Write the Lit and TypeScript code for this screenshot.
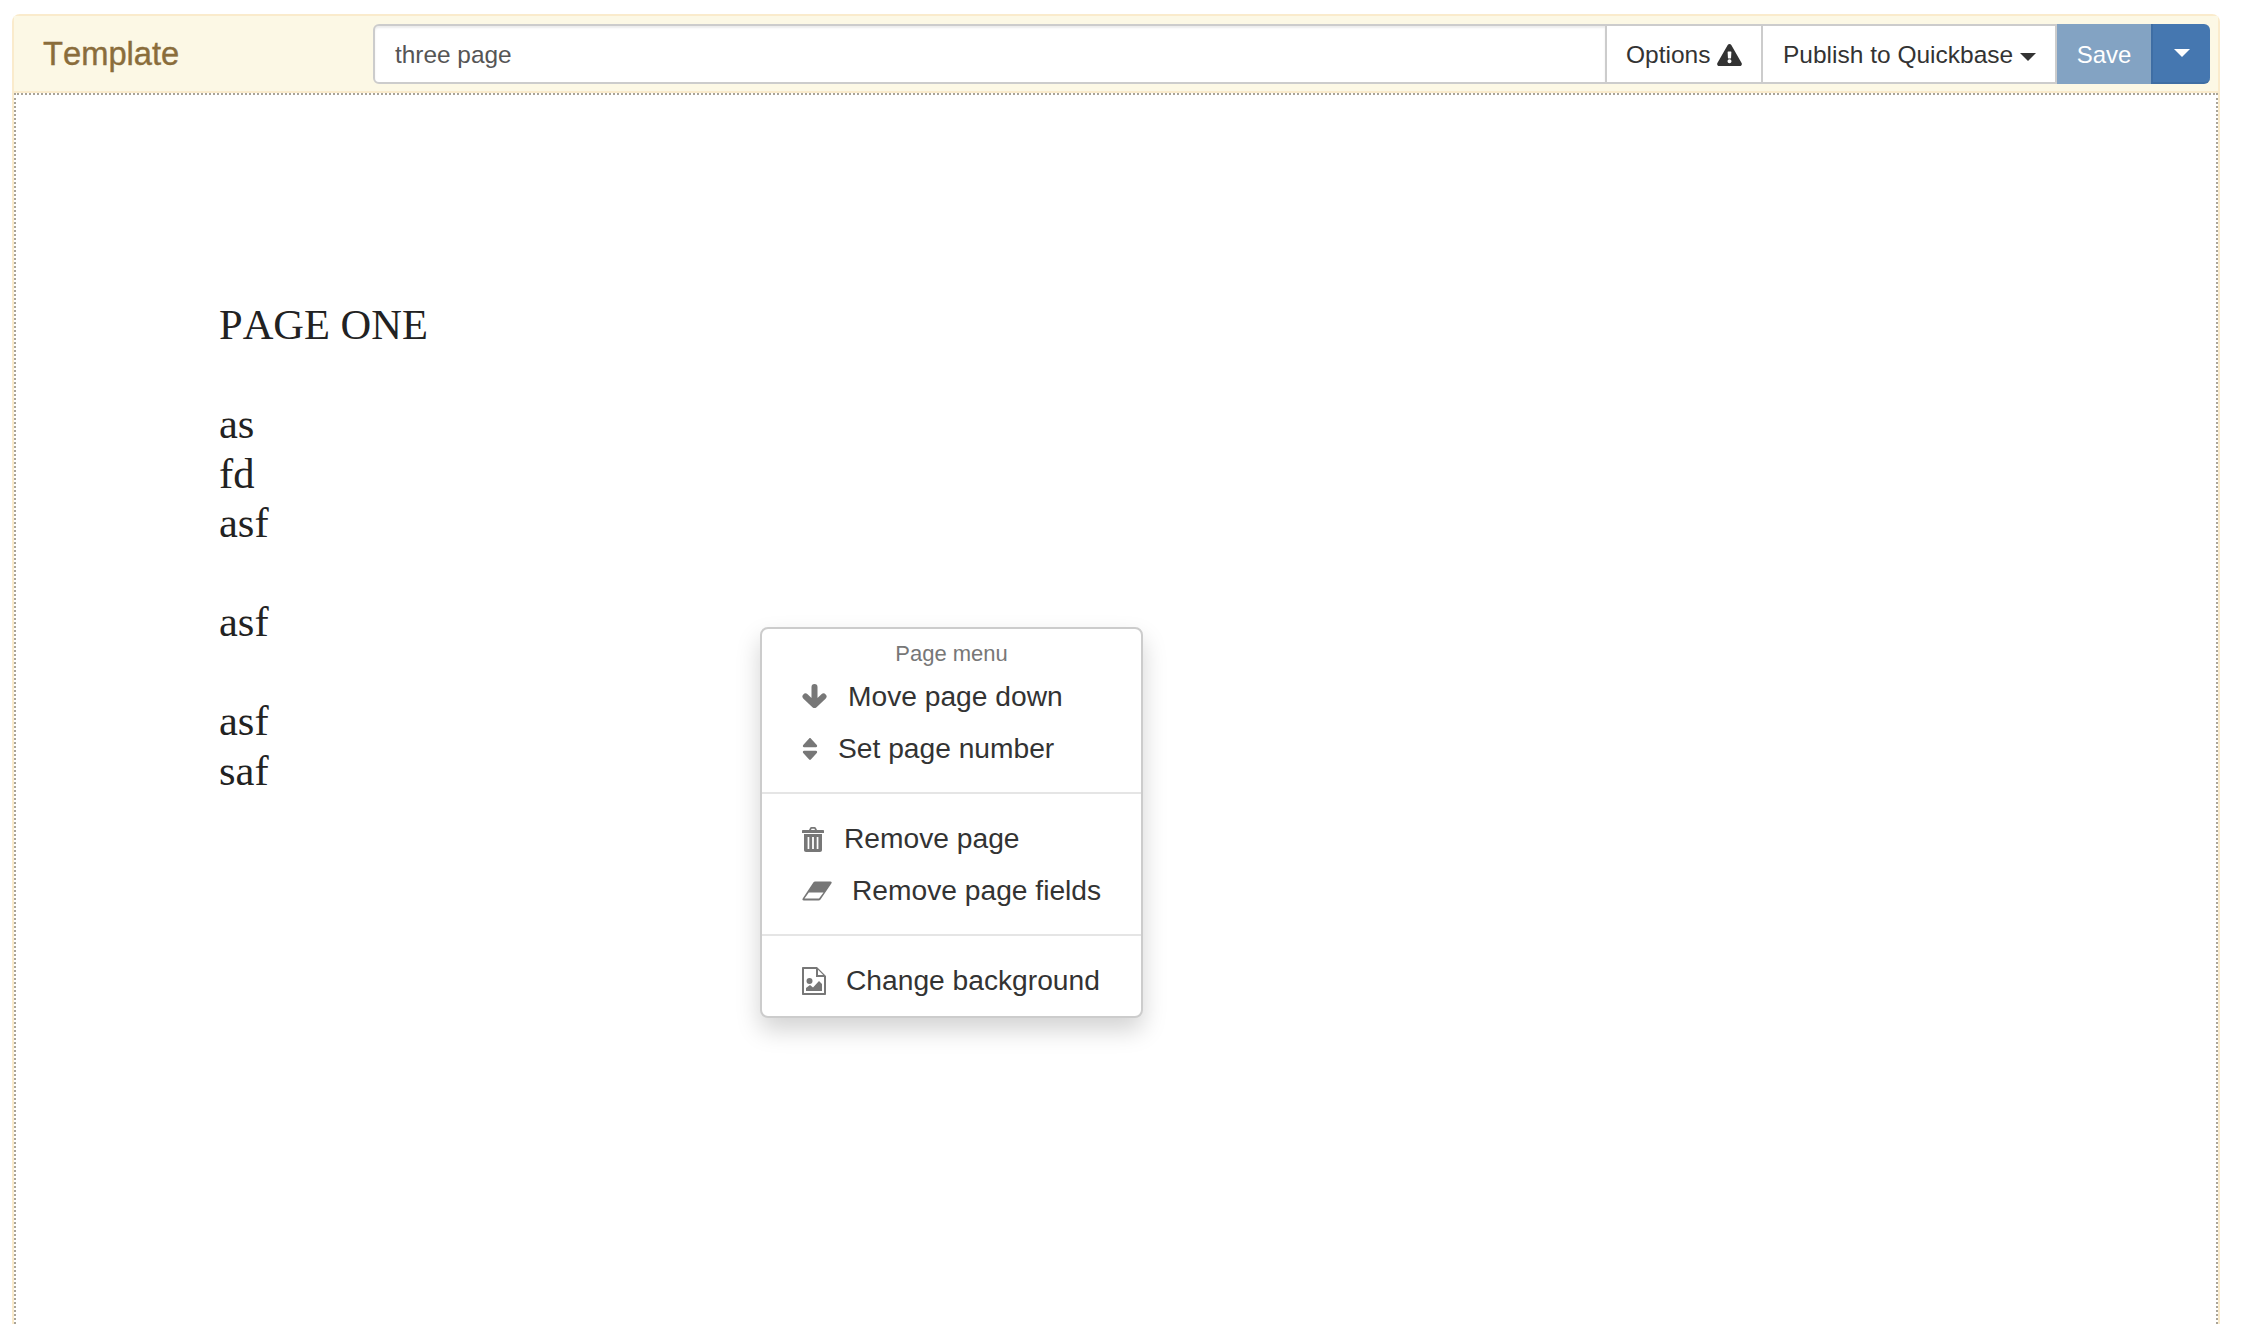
import { LitElement, html, css } from "lit";
import { customElement } from "lit/decorators.js";

@customElement("app-root")
export class AppRoot extends LitElement {
  static styles = css`
    :host {
      display: block;
      height: 1324px;
      box-sizing: border-box;
      padding: 14px 22px 0 12px;
      overflow: hidden;
      background: #fff;
      font-family: "Liberation Sans", Arial, sans-serif;
      font-kerning: none;
      color: #333;
    }
    .panel {
      position: relative;
      height: 100%;
      display: flex;
      flex-direction: column;
      box-sizing: border-box;
      border: 2px solid #faebcc;
      border-bottom: 0;
      border-radius: 8px 8px 0 0;
    }
    .head {
      height: 77px;
      flex: none;
      box-sizing: border-box;
      padding: 8px 8px 7px 29px;
      display: flex;
      align-items: stretch;
      background: #fcf8e5;
      border-bottom: 2px solid #faebcc;
    }
    .title {
      width: 330px;
      flex: none;
      align-self: center;
      font-size: 32.7px;
      color: #8a6d3b;
      -webkit-text-stroke: 0.4px #8a6d3b;
    }
    .group {
      flex: 1;
      display: flex;
      min-width: 0;
    }
    .input {
      flex: 1;
      display: flex;
      align-items: center;
      box-sizing: border-box;
      padding: 2px 0 0 20px;
      background: #fff;
      border: 2px solid #ccc;
      border-radius: 6px 0 0 6px;
      font-size: 24.4px;
      color: #555;
      box-shadow: inset 0 2px 2px rgba(0, 0, 0, 0.075);
    }
    .btn {
      display: flex;
      align-items: center;
      flex: none;
      box-sizing: border-box;
      padding-top: 2px;
      background: #fff;
      border: 2px solid #ccc;
      border-left: 0;
      font-size: 24.5px;
      color: #333;
    }
    .options {
      width: 156px;
      padding-left: 19px;
      gap: 7px;
    }
    .publish {
      width: 294px;
      padding-left: 20px;
      gap: 7px;
    }
    .save {
      width: 94px;
      justify-content: center;
      background: #83a3c3;
      border: 0;
      color: #fff;
      font-size: 24px;
    }
    .more {
      width: 59px;
      justify-content: center;
      padding-top: 0;
      background: #4577b0;
      border: 0;
      border-bottom: 2px solid #3f6ea4;
      border-left: 2px solid #3f6ea4;
      border-radius: 0 6px 6px 0;
    }
    .caret {
      width: 0;
      height: 0;
      margin-top: 3px;
      border-left: 8px solid transparent;
      border-right: 8px solid transparent;
      border-top: 8px solid #333;
    }
    .more .caret {
      border-top-color: #fff;
      margin-top: 0;
      margin-bottom: 0;
    }
    .warn {
      width: 25px;
      height: 22px;
      fill: #333;
    }
    .body {
      flex: 1;
      box-sizing: border-box;
      padding: 205px 0 0 203px;
      border-top: 2px dotted #a9a498;
      border-left: 2px dotted #a9a498;
      border-right: 2px dotted #a9a498;
      font-family: "Liberation Serif", "Times New Roman", serif;
      font-size: 42.5px;
      line-height: 49.5px;
      color: #222;
    }
    .body p {
      margin: 0 0 49.5px;
    }
    .menu {
      position: absolute;
      left: 746px;
      top: 611px;
      width: 383px;
      box-sizing: border-box;
      padding: 8px 0 9px;
      background: #fff;
      border: 2px solid #ccc;
      border-radius: 8px;
      box-shadow: 0 12px 24px rgba(0, 0, 0, 0.175);
      font-size: 28.2px;
      color: #333;
    }
    .menu-title {
      height: 34px;
      line-height: 34px;
      text-align: center;
      font-size: 22px;
      color: #777;
    }
    .item {
      height: 52px;
      box-sizing: border-box;
      display: flex;
      align-items: center;
      padding: 0 0 2px 40px;
      white-space: nowrap;
    }
    .item svg {
      flex: none;
      fill: #777;
      margin-top: 2px;
    }
    .item .arrow {
      width: 25px;
      height: 24px;
      margin-right: 21px;
      margin-top: -1px;
      fill: none;
      stroke: #777;
      stroke-width: 6;
      stroke-linecap: round;
      stroke-linejoin: round;
    }
    .sort {
      width: 16px;
      height: 28px;
      margin-right: 20px;
    }
    .trash {
      width: 22px;
      height: 25px;
      margin-right: 20px;
    }
    .eraser {
      width: 30px;
      height: 20px;
      margin-right: 20px;
    }
    .file {
      width: 24px;
      height: 28px;
      margin-right: 20px;
    }
    hr {
      margin: 17px 0 19px;
      border: 0;
      border-top: 2px solid #e5e5e5;
    }
  `;

  render() {
    return html`
      <div class="panel">
        <div class="head">
          <div class="title">Template</div>
          <div class="group">
            <div class="input">three page</div>
            <div class="btn options">
              Options
              <svg class="warn" viewBox="0 0 576 512"><path d="M569.517 440.013C587.975 472.007 564.806 512 527.94 512H48.054c-36.93 0-60.04-40.055-41.577-71.987L246.423 23.985c18.467-32.009 64.72-31.951 83.154 0l239.94 416.028zM288 354c-25.405 0-46 20.595-46 46s20.595 46 46 46 46-20.595 46-46-20.595-46-46-46zm-43.673-165.346l7.418 136c.347 6.364 5.609 11.346 11.982 11.346h48.546c6.373 0 11.635-4.982 11.982-11.346l7.418-136c.375-6.874-5.098-12.654-11.982-12.654h-63.383c-6.884 0-12.356 5.78-11.981 12.654z"/></svg>
            </div>
            <div class="btn publish">Publish to Quickbase <span class="caret"></span></div>
            <div class="btn save">Save</div>
            <div class="btn more"><span class="caret"></span></div>
          </div>
        </div>
        <div class="body">
          <p>PAGE ONE</p>
          <p>as<br />fd<br />asf</p>
          <p>asf</p>
          <p>asf<br />saf</p>
        </div>
        <div class="menu">
          <div class="menu-title">Page menu</div>
          <div class="item">
            <svg class="arrow" viewBox="0 0 25 24"><path d="M12.500 3V20.500M3.500 12.500 12.500 21 21.500 12.500"/></svg>
            Move page down
          </div>
          <div class="item">
            <svg class="sort" viewBox="0 0 320 512" preserveAspectRatio="none"><path d="M41 288h238c21.4 0 32.1 25.900 17 41L177 448c-9.400 9.400-24.600 9.400-33.900 0L24 329c-15.100-15.100-4.400-41 17-41zm255-105L177 64c-9.400-9.400-24.600-9.400-33.900 0L24 183c-15.100 15.100-4.400 41 17 41h238c21.400 0 32.100-25.900 17-41z"/></svg>
            Set page number
          </div>
          <hr />
          <div class="item">
            <svg class="trash" viewBox="0 0 22 25"><path fill-rule="evenodd" d="M7 3 8 .9C8.300.3 8.800 0 9.400 0h3.200c.6 0 1.100.3 1.400.9L15 3h6c.6 0 1 .4 1 1v2H0V4c0-.6.400-1 1-1zM9 3h4l-.6-1.300H9.600zM2 7h18v16c0 1.200-.8 2-2 2H4c-1.200 0-2-.8-2-2zm3.600 3v12h1.700V10zm4.500 0v12h1.800V10zm4.600 0v12h1.700V10z"/></svg>
            Remove page
          </div>
          <div class="item">
            <svg class="eraser" viewBox="0 0 30 20"><path fill-rule="evenodd" d="M13 .5h15.500c1 0 1.500.9 1 1.700L18.500 18.500c-.5.700-1 1-1.800 1H1.800c-1.200 0-1.700-1-1.100-2L11.500 1.200C12 .7 12.400.5 13 .5zM6.800 11.500 2.500 17.500H17l4.500-6z"/></svg>
            Remove page fields
          </div>
          <hr />
          <div class="item">
            <svg class="file" viewBox="0 0 24 28"><path fill-rule="evenodd" d="M1 0h14l9 9v18c0 .6-.4 1-1 1H1c-.6 0-1-.4-1-1V1c0-.6.400-1 1-1zm1 2v24h20V10h-8V2zm14 .8V8h5.200zM7.500 11a3 3 0 1 1 0 6 3 3 0 0 1 0-6zM4 24v-3l4-3 3 2.500 6-6.500 3 3v7z"/></svg>
            Change background
          </div>
        </div>
      </div>
    `;
  }
}
